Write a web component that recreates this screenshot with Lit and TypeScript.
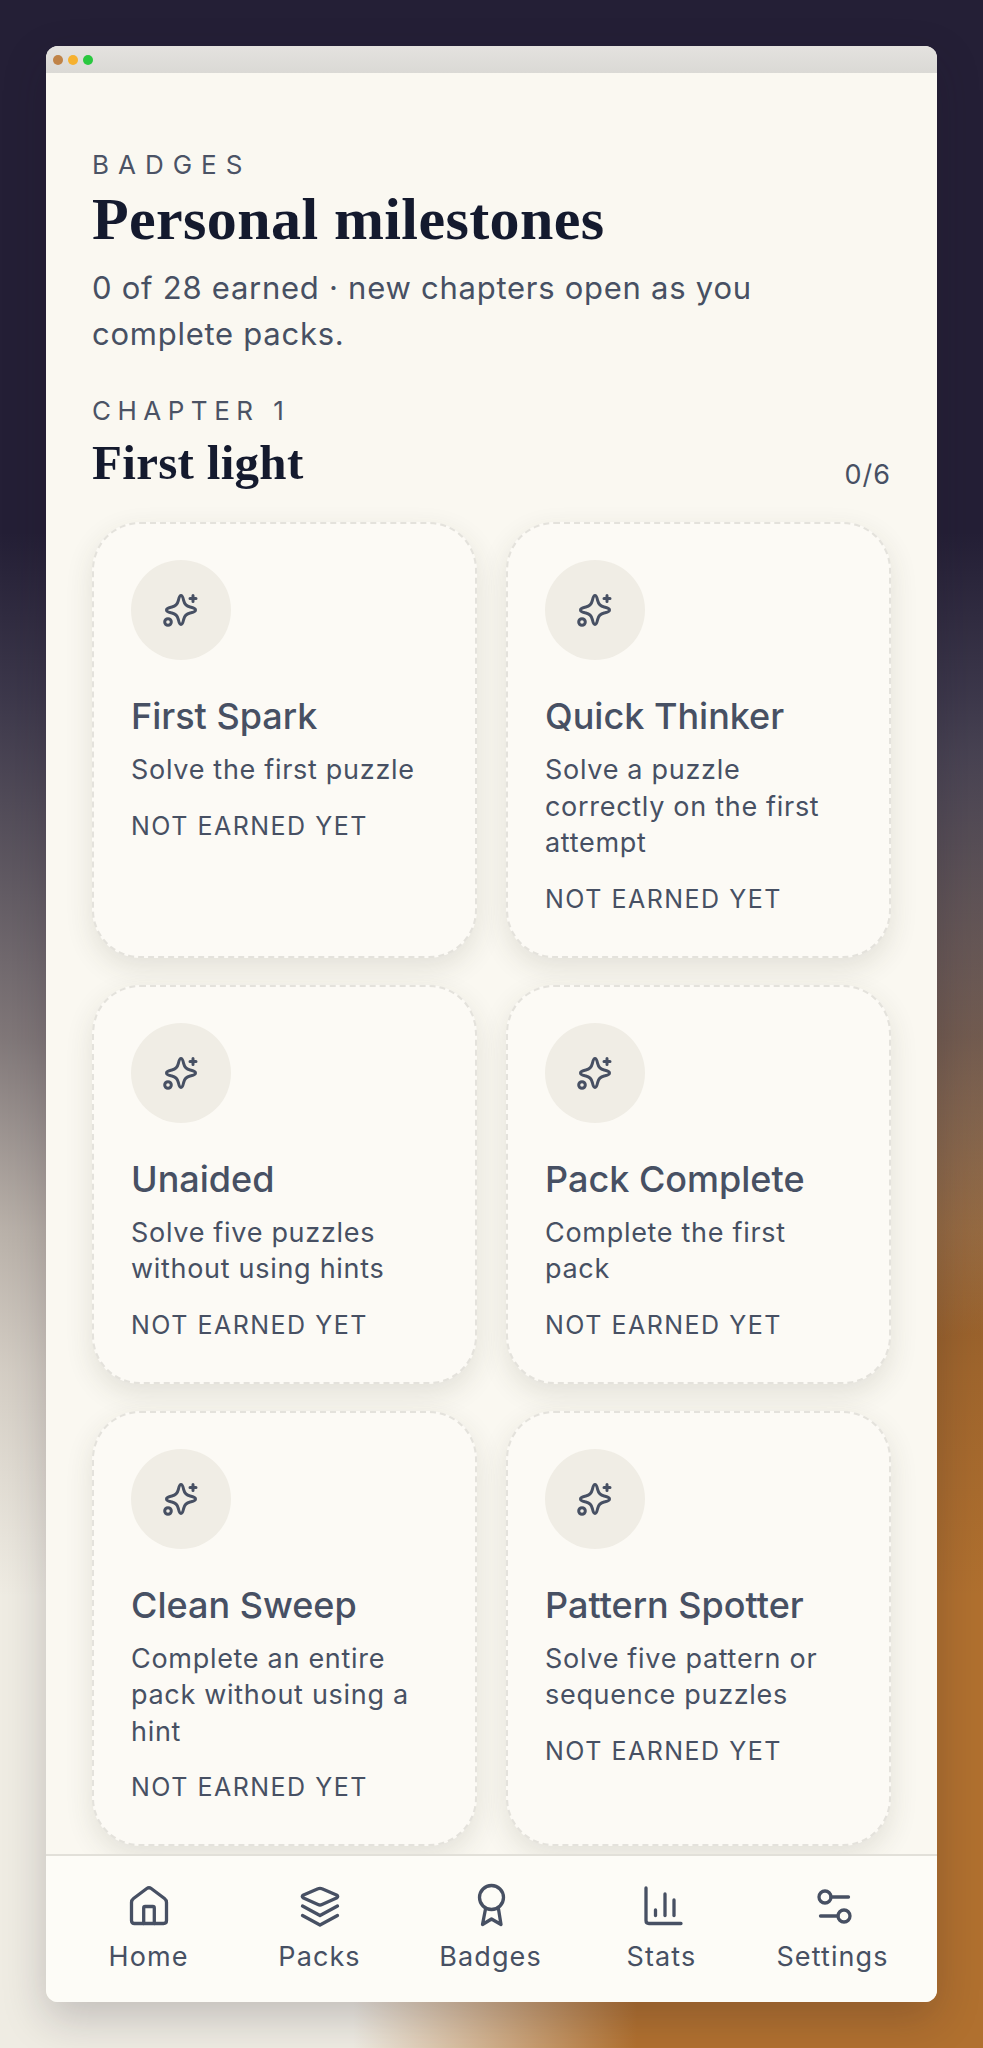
import { LitElement, html, css, svg } from "lit";
import { customElement } from "lit/decorators.js";

const spark = html`<svg class="spark" viewBox="0 0 40 40" fill="none" stroke="currentColor" stroke-width="3" stroke-linecap="round" stroke-linejoin="round">
  <path d="M20 5.500c1.700 0 2.100 2.600 2.700 5.200.8 3.500 2.800 5.500 6.400 6.300 2.600.6 5.400.9 5.400 3s-2.800 2.400-5.400 3c-3.600.8-5.600 2.800-6.400 6.300-.6 2.600-1 5.200-2.700 5.200s-2.100-2.600-2.700-5.200c-.8-3.500-2.800-5.500-6.400-6.300-2.600-.6-5.400-.9-5.400-3s2.800-2.400 5.400-3c3.600-.8 5.600-2.800 6.400-6.300.6-2.600 1-5.200 2.700-5.200z"/>
  <path d="M32 5.500v6M29 8.500h6"/>
  <circle cx="7" cy="32" r="3.300"/>
</svg>`;

const navIcons: Record<string, unknown> = {
  Home: svg`<path d="M17.800 3.500Q20 1.900 22.200 3.500L35.500 13.500Q37.500 15 37.500 17.500V35.500Q37.500 38.500 34.500 38.500H5.500Q2.500 38.500 2.500 35.500V17.500Q2.500 15 4.500 13.500Z"/><path d="M14.700 38.500V23Q14.700 21.500 16.200 21.500H23.800Q25.300 21.500 25.300 23V38.500"/>`,
  Packs: svg`<path d="M18 3.800Q20 2.800 22 3.800L36.500 10Q39 11.500 36.500 13L22 19.500Q20 20.500 18 19.500L3.500 13Q1 11.500 3.500 10Z"/><path d="M2.500 21 20 30.500 37.500 21"/><path d="M2.500 30.500 20 40 37.500 30.500"/>`,
  Badges: svg`<circle cx="20.500" cy="12.500" r="12"/><path d="M14.500 24 11.500 39.500 20.500 34 30 39.500 27.500 24"/>`,
  Stats: svg`<path d="M4 3V35.500Q4 38.500 7 38.500H39"/><path d="M13.500 25V30.500"/><path d="M23 9V30.500"/><path d="M32 15V30.500"/>`,
  Settings: svg`<circle cx="12" cy="12" r="6"/><path d="M18 12H35.500"/><circle cx="31" cy="31" r="6"/><path d="M25 31H7.500"/>`,
};

interface Badge { t: string; d: string }
const badges: Badge[] = [
  { t: "First Spark", d: "Solve the first puzzle" },
  { t: "Quick Thinker", d: "Solve a puzzle correctly on the first attempt" },
  { t: "Unaided", d: "Solve five puzzles without using hints" },
  { t: "Pack Complete", d: "Complete the first pack" },
  { t: "Clean Sweep", d: "Complete an entire pack without using a hint" },
  { t: "Pattern Spotter", d: "Solve five pattern or sequence puzzles" },
];

@customElement("app-root")
export class AppRoot extends LitElement {
  static styles = css`
    :host {
      display: block;
      height: 2048px;
      box-sizing: border-box;
      padding: 46px;
      font-family: Inter, "Liberation Sans", sans-serif;
      color: #475063;
      background:
        linear-gradient(180deg,
          rgb(36, 31, 54) 0,
          rgb(36, 31, 54) 26%,
          rgba(36, 31, 54, 0.88) 34%,
          rgba(36, 28, 45, 0.72) 42%,
          rgba(34, 20, 30, 0.54) 50.6%,
          rgba(60, 40, 35, 0.3) 60%,
          rgba(70, 45, 35, 0.16) 67%,
          rgba(90, 60, 40, 0) 78%),
        radial-gradient(ellipse 630px 1300px at 100% 100%, #b0702f 0, #b0702f 55%, rgba(176, 112, 47, 0) 100%),
        #efece3;
    }
    .win {
      height: 100%;
      display: flex;
      flex-direction: column;
      border-radius: 12px;
      overflow: hidden;
      background: #faf8f1;
      box-shadow: 0 16px 44px rgba(30, 25, 40, 0.22);
    }
    .bar {
      flex: none;
      height: 27px;
      background: linear-gradient(180deg, #e4e2df, #dad9d5);
      display: flex;
      align-items: center;
      gap: 5px;
      padding-left: 7px;
      box-sizing: border-box;
    }
    .dot { width: 10px; height: 10px; border-radius: 50%; }
    .dot.r { background: #c08347; }
    .dot.y { background: #f6b12f; }
    .dot.g { background: #29c83f; }
    .main {
      flex: 1;
      min-height: 0;
      overflow: hidden;
      padding: 76px 46px 0;
    }
    .eyebrow {
      font-size: 26px;
      line-height: 32px;
      letter-spacing: 9px;
      color: #4b5365;
    }
    h1 {
      margin: 7px 0 0;
      font: 700 60px/62px "Liberation Serif", serif;
      letter-spacing: 0.4px;
      color: #141a2e;
    }
    .sub {
      margin: 15px 0 0;
      font-size: 31px;
      line-height: 46px;
      letter-spacing: 0.74px;
      max-width: 780px;
    }
    .chap { margin-top: 38px; display: flex; justify-content: space-between; align-items: flex-end; }
    .chap .eyebrow { letter-spacing: 6.5px; }
    h2 {
      margin: 9px 0 0;
      font: 700 49px/54px "Liberation Serif", serif;
      letter-spacing: 0.3px;
      color: #141a2e;
    }
    .count { font-size: 27px; letter-spacing: 1px; line-height: 30px; }
    .grid {
      margin-top: 32px;
      display: grid;
      grid-template-columns: 1fr 1fr;
      gap: 27px 29px;
    }
    .card {
      box-sizing: border-box;
      padding: 36px 36px 39px 37px;
      border: 2px dashed #e4e2dc;
      border-radius: 48px;
      background: #fcfaf5;
      box-shadow: 0 10px 28px rgba(60, 55, 40, 0.12);
    }
    .ic {
      width: 100px;
      height: 100px;
      border-radius: 50%;
      background: #f0ede5;
      display: flex;
      align-items: center;
      justify-content: center;
    }
    .spark { width: 40px; height: 40px; display: block; }
    h3 {
      margin: 31px 0 0;
      font-size: 36px;
      line-height: 50px;
      font-weight: 500;
      color: #475063;
    }
    .d {
      margin: 11px 0 0;
      font-size: 27px;
      line-height: 36.5px;
      letter-spacing: 0.7px;
    }
    .st {
      margin-top: 19px;
      font-size: 25px;
      line-height: 36px;
      letter-spacing: 1.5px;
    }
    nav {
      flex: none;
      height: 148px;
      box-sizing: border-box;
      border-top: 2px solid #e2e0d9;
      background: #fdfcf7;
      padding: 29px 19px 0 17px;
      display: grid;
      grid-template-columns: repeat(5, 1fr);
    }
    .tab { display: flex; flex-direction: column; align-items: center; gap: 14px; }
    .tab svg { width: 40px; height: 40px; display: block; overflow: visible; fill: none; stroke: currentColor; stroke-width: 3.3; stroke-linecap: round; stroke-linejoin: round; }
    .tab span { font-size: 27px; line-height: 36px; letter-spacing: 1.1px; }
  `;

  render() {
    return html`<div class="win">
      <div class="bar">
        <i class="dot r"></i>
        <i class="dot y"></i>
        <i class="dot g"></i>
      </div>
      <div class="main">
        <div class="eyebrow">BADGES</div>
        <h1>Personal milestones</h1>
        <p class="sub">0 of 28 earned · new chapters open as you complete packs.</p>
        <div class="chap">
          <div>
            <div class="eyebrow">CHAPTER 1</div>
            <h2>First light</h2>
          </div>
          <div class="count">0/6</div>
        </div>
        <div class="grid">
          ${badges.map(
            (b) => html`<div class="card">
              <div class="ic">${spark}</div>
              <h3>${b.t}</h3>
              <p class="d">${b.d}</p>
              <div class="st">NOT EARNED YET</div>
            </div>`
          )}
        </div>
      </div>
      <nav>
        ${Object.keys(navIcons).map(
          (k) => html`<div class="tab"><svg viewBox="0 0 40 40">${navIcons[k]}</svg><span>${k}</span></div>`
        )}
      </nav>
    </div>`;
  }
}
